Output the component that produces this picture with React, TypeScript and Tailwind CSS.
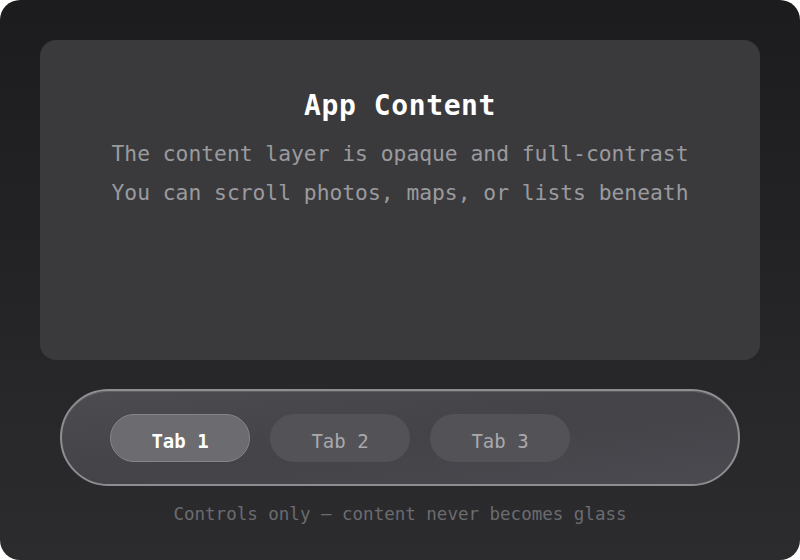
import React from "react"

const tabs = ["Tab 1", "Tab 2", "Tab 3"]

const mono = "font-['DejaVu_Sans_Mono',monospace]"

export default function App() {
  return (
    <div className="w-[800px] h-[560px] bg-white">
      <div
        className={`w-full h-full rounded-[20px] bg-gradient-to-b from-[#1c1c1e] to-[#2c2c2e] flex flex-col px-[40px] pt-[40px] ${mono}`}
      >
        <div className="h-[320px] rounded-2xl bg-[#3a3a3c] flex flex-col items-center pt-[49px]">
          <h1 className="text-[28px] leading-[34px] font-bold text-white tracking-[0.6px]">App Content</h1>
          <p className="mt-[11px] text-[21.3px] leading-[39px] text-[#9a9a9e]">
            The content layer is opaque and full-contrast
          </p>
          <p className="text-[21.3px] leading-[39px] text-[#9a9a9e]">
            You can scroll photos, maps, or lists beneath
          </p>
        </div>

        <div className="mt-[29px] mx-[20px] h-[97px] rounded-full border-2 border-[#8e8e92] bg-gradient-to-br from-[#4b4b50] via-[#434348] to-[#4a4a50] shadow-[inset_0_1px_0_rgba(255,255,255,0.12)] flex items-center gap-[20px] pl-[48px]">
          {tabs.map((t, idx) => (
            <div
              key={idx}
              className={
                idx === 0
                  ? "w-[140px] h-[48px] rounded-full bg-[#6b6b70] border border-[#848489] flex items-center justify-center pt-[7px] text-white font-bold text-[19px]"
                  : "w-[140px] h-[48px] rounded-full bg-[#525257] flex items-center justify-center pt-[7px] text-[#a9a9ad] text-[19px]"
              }
            >
              {t}
            </div>
          ))}
        </div>

        <p className="mt-[15px] text-center text-[17.5px] text-[#6c6c70]">
          Controls only — content never becomes glass
        </p>
      </div>
    </div>
  )
}
